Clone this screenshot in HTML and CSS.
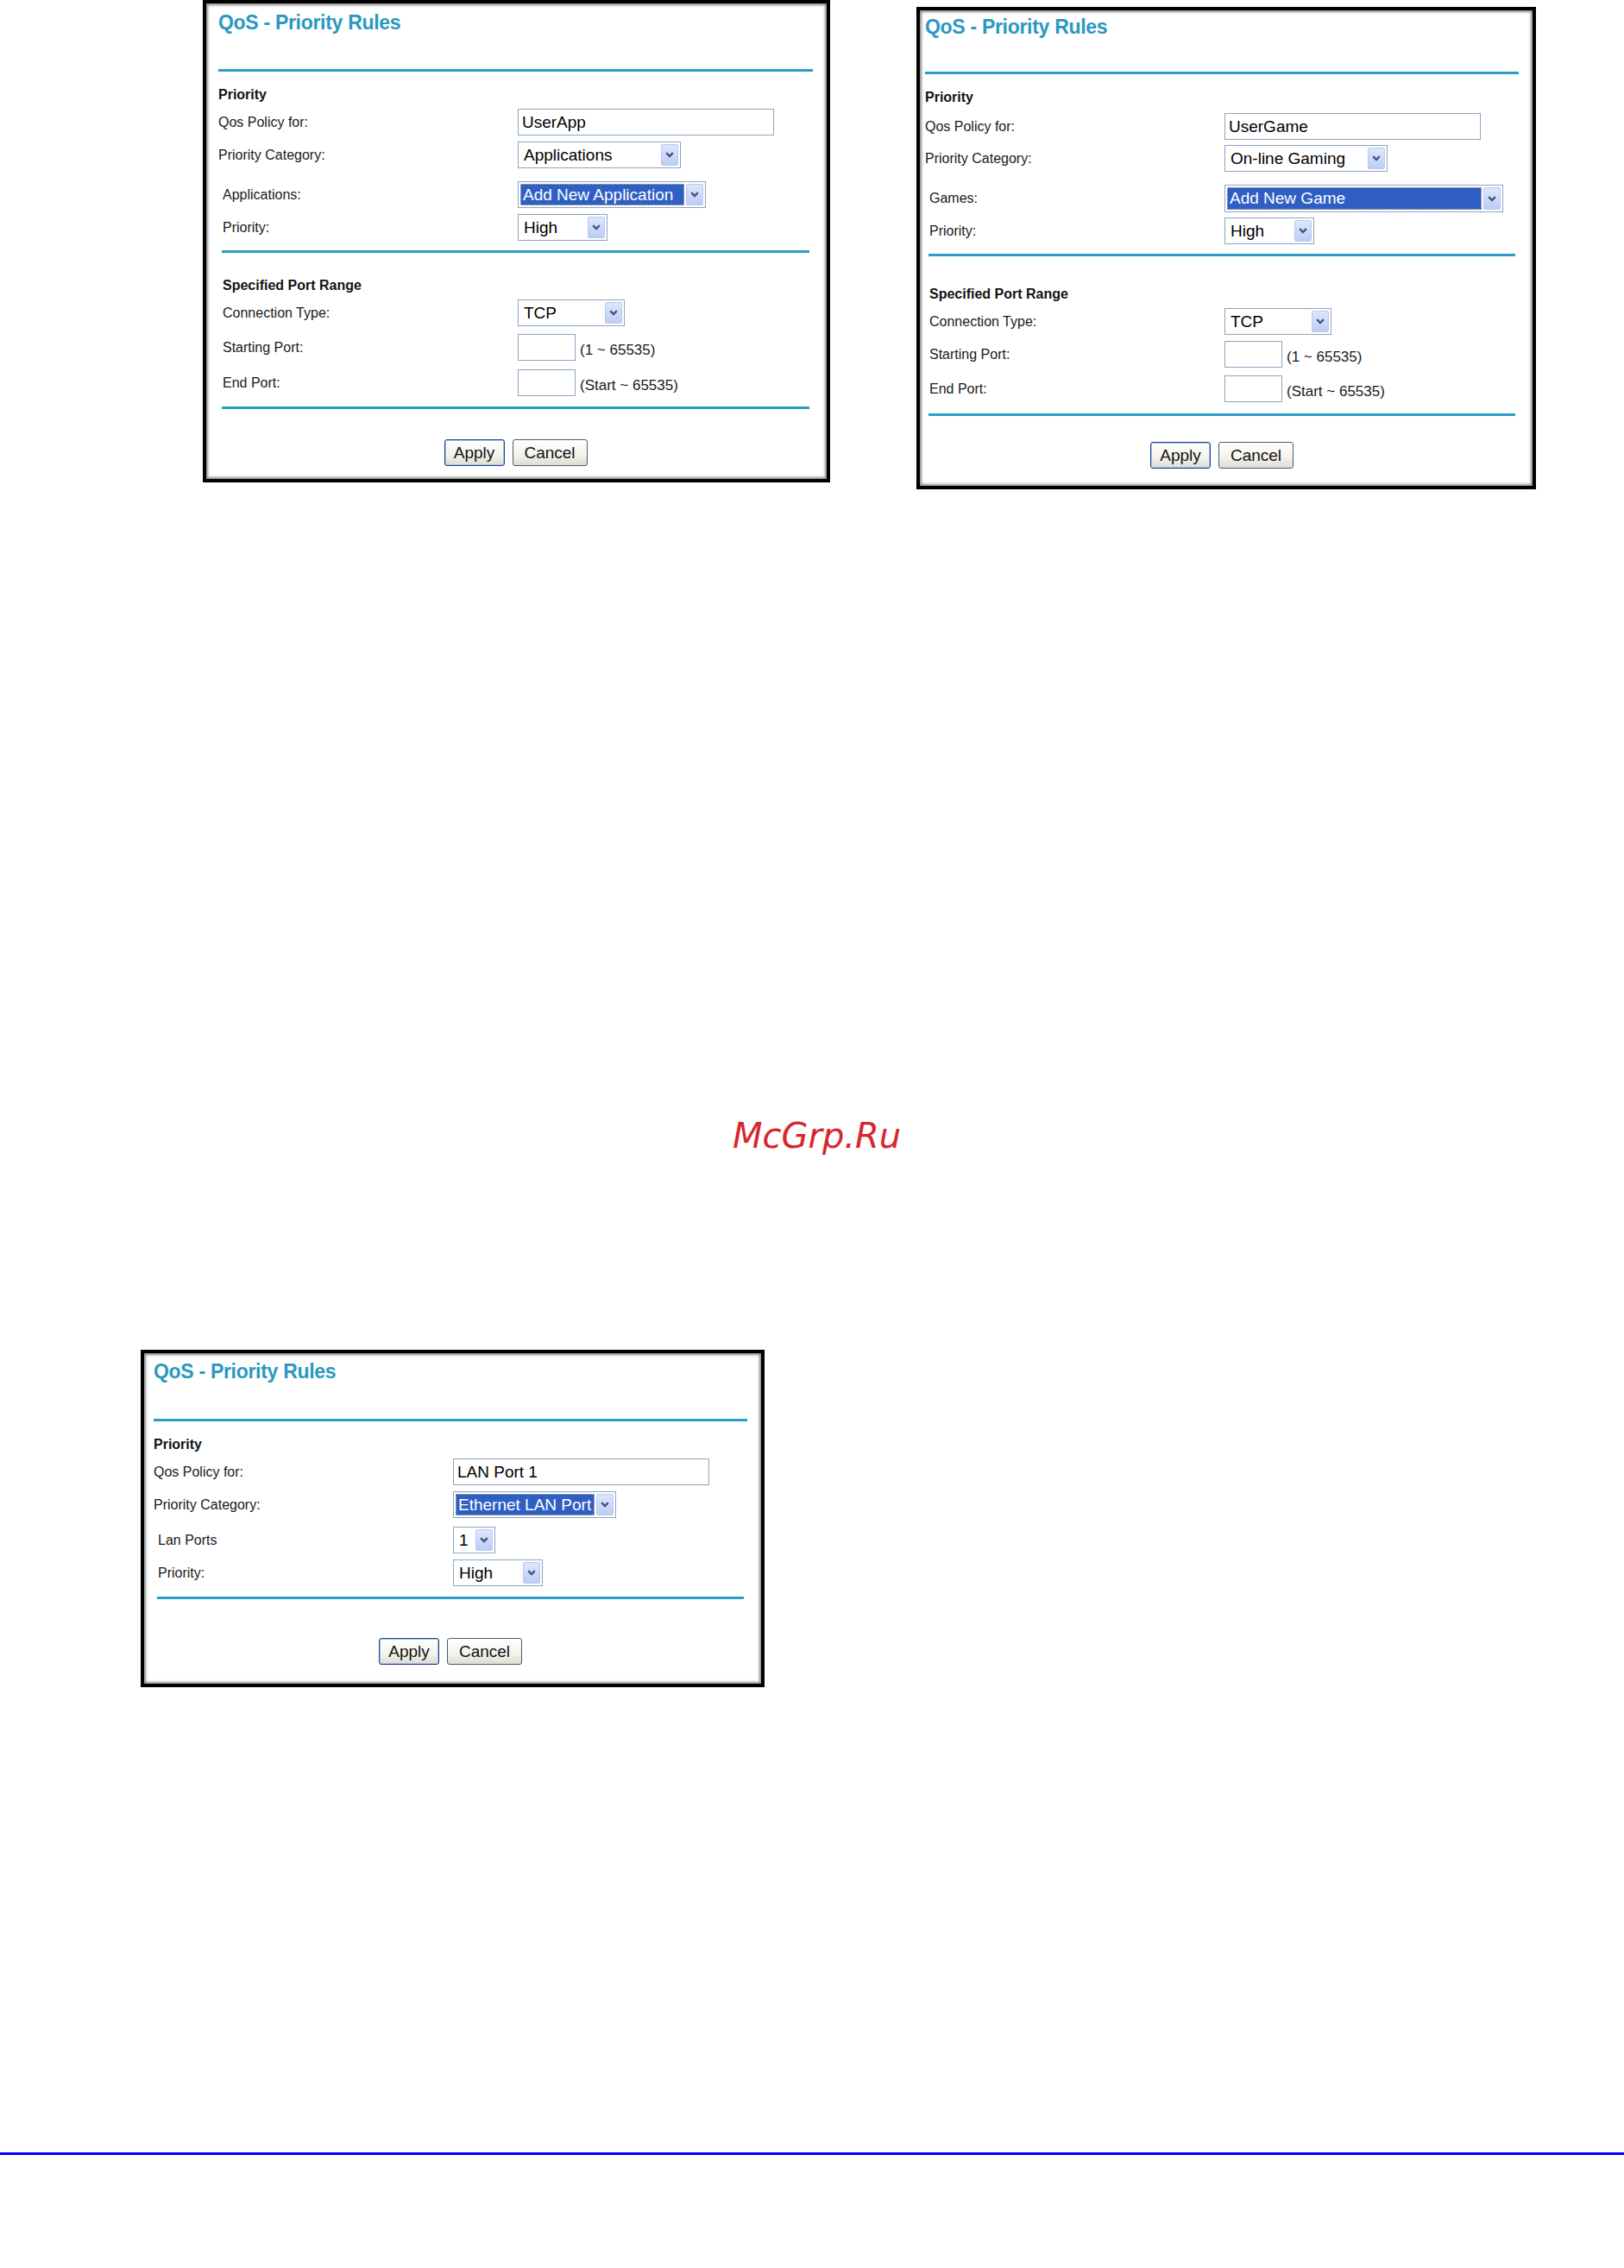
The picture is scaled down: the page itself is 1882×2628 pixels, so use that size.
FILE: index.html
```html
<!DOCTYPE html>
<html lang="en">
<head>
<meta charset="utf-8">
<title>QoS - Priority Rules</title>
<link rel="stylesheet" href="styles.css">
</head>
<body>
<div class="page">
  <div class="top-row">
    <section class="panel p1">
      <h2 class="title">QoS - Priority Rules</h2>
      <div class="rule r1"></div>
      <h3 class="head h1">Priority</h3>
      <div class="row g1"><span class="lbl">Qos Policy for:</span><input class="txt w-qos" type="text" value="UserApp"></div>
      <div class="row g2"><span class="lbl">Priority Category:</span><div class="sel w-cat"><span class="val">Applications</span><span class="arr"><svg viewBox="0 0 10 7" width="10" height="7"><path d="M1.2 1.2 L5 5 L8.8 1.2" fill="none" stroke="#44557d" stroke-width="2.4"/></svg></span></div></div>
      <div class="row ind g3"><span class="lbl">Applications:</span><div class="sel w-app"><span class="val hi">Add New Application</span><span class="arr"><svg viewBox="0 0 10 7" width="10" height="7"><path d="M1.2 1.2 L5 5 L8.8 1.2" fill="none" stroke="#44557d" stroke-width="2.4"/></svg></span></div></div>
      <div class="row ind g4"><span class="lbl">Priority:</span><div class="sel w-pri"><span class="val">High</span><span class="arr"><svg viewBox="0 0 10 7" width="10" height="7"><path d="M1.2 1.2 L5 5 L8.8 1.2" fill="none" stroke="#44557d" stroke-width="2.4"/></svg></span></div></div>
      <div class="rule r2"></div>
      <h3 class="head ind h2">Specified Port Range</h3>
      <div class="row ind g5"><span class="lbl">Connection Type:</span><div class="sel w-con"><span class="val">TCP</span><span class="arr"><svg viewBox="0 0 10 7" width="10" height="7"><path d="M1.2 1.2 L5 5 L8.8 1.2" fill="none" stroke="#44557d" stroke-width="2.4"/></svg></span></div></div>
      <div class="row ind g6"><span class="lbl">Starting Port:</span><input class="txt w-port" type="text" value=""><span class="hint">(1 ~ 65535)</span></div>
      <div class="row ind g7"><span class="lbl">End Port:</span><input class="txt w-port" type="text" value=""><span class="hint">(Start ~ 65535)</span></div>
      <div class="rule r3"></div>
      <div class="btns b1"><button class="btn apply" type="button">Apply</button><button class="btn cancel" type="button">Cancel</button></div>
    </section>

    <section class="panel p2">
      <h2 class="title">QoS - Priority Rules</h2>
      <div class="rule r1"></div>
      <h3 class="head h1">Priority</h3>
      <div class="row g1"><span class="lbl">Qos Policy for:</span><input class="txt w-qos" type="text" value="UserGame"></div>
      <div class="row g2"><span class="lbl">Priority Category:</span><div class="sel w-cat"><span class="val">On-line Gaming</span><span class="arr"><svg viewBox="0 0 10 7" width="10" height="7"><path d="M1.2 1.2 L5 5 L8.8 1.2" fill="none" stroke="#44557d" stroke-width="2.4"/></svg></span></div></div>
      <div class="row ind g3"><span class="lbl">Games:</span><div class="sel w-game"><span class="val hi">Add New Game</span><span class="arr"><svg viewBox="0 0 10 7" width="10" height="7"><path d="M1.2 1.2 L5 5 L8.8 1.2" fill="none" stroke="#44557d" stroke-width="2.4"/></svg></span></div></div>
      <div class="row ind g4"><span class="lbl">Priority:</span><div class="sel w-pri"><span class="val">High</span><span class="arr"><svg viewBox="0 0 10 7" width="10" height="7"><path d="M1.2 1.2 L5 5 L8.8 1.2" fill="none" stroke="#44557d" stroke-width="2.4"/></svg></span></div></div>
      <div class="rule r2"></div>
      <h3 class="head ind h2">Specified Port Range</h3>
      <div class="row ind g5"><span class="lbl">Connection Type:</span><div class="sel w-con"><span class="val">TCP</span><span class="arr"><svg viewBox="0 0 10 7" width="10" height="7"><path d="M1.2 1.2 L5 5 L8.8 1.2" fill="none" stroke="#44557d" stroke-width="2.4"/></svg></span></div></div>
      <div class="row ind g6"><span class="lbl">Starting Port:</span><input class="txt w-port" type="text" value=""><span class="hint">(1 ~ 65535)</span></div>
      <div class="row ind g7"><span class="lbl">End Port:</span><input class="txt w-port" type="text" value=""><span class="hint">(Start ~ 65535)</span></div>
      <div class="rule r3"></div>
      <div class="btns b1"><button class="btn apply" type="button">Apply</button><button class="btn cancel" type="button">Cancel</button></div>
    </section>
  </div>

  <div class="watermark">McGrp.Ru</div>

  <section class="panel p3">
    <h2 class="title">QoS - Priority Rules</h2>
    <div class="rule r1"></div>
    <h3 class="head h1">Priority</h3>
    <div class="row g1"><span class="lbl">Qos Policy for:</span><input class="txt w-qos" type="text" value="LAN Port 1"></div>
    <div class="row g2"><span class="lbl">Priority Category:</span><div class="sel w-cat"><span class="val hi">Ethernet LAN Port</span><span class="arr"><svg viewBox="0 0 10 7" width="10" height="7"><path d="M1.2 1.2 L5 5 L8.8 1.2" fill="none" stroke="#44557d" stroke-width="2.4"/></svg></span></div></div>
    <div class="row ind g3"><span class="lbl">Lan Ports</span><div class="sel w-lan"><span class="val">1</span><span class="arr"><svg viewBox="0 0 10 7" width="10" height="7"><path d="M1.2 1.2 L5 5 L8.8 1.2" fill="none" stroke="#44557d" stroke-width="2.4"/></svg></span></div></div>
    <div class="row ind g4"><span class="lbl">Priority:</span><div class="sel w-pri"><span class="val">High</span><span class="arr"><svg viewBox="0 0 10 7" width="10" height="7"><path d="M1.2 1.2 L5 5 L8.8 1.2" fill="none" stroke="#44557d" stroke-width="2.4"/></svg></span></div></div>
    <div class="rule r2"></div>
    <div class="btns b1"><button class="btn apply" type="button">Apply</button><button class="btn cancel" type="button">Cancel</button></div>
  </section>

  <div class="footer-line"></div>
</div>
</body>
</html>
```

FILE: styles.css
```css
* { box-sizing: border-box; }

html, body {
  margin: 0;
  padding: 0;
  background: #ffffff;
}

body {
  font-family: "Liberation Sans", Arial, sans-serif;
  color: #000;
}

.page {
  width: 1882px;
  min-height: 2628px;
}

.top-row {
  display: flex;
  align-items: flex-start;
}

/* ---------- panel frame ---------- */
.panel {
  display: flex;
  flex-direction: column;
  align-items: flex-start;
  background: #fff;
  border: 4px solid #000;
  box-shadow: inset 0 0 3px 2px #8c8c8c;
  padding: 0 16px 0 14px;
}

.p1 { width: 727px; height: 559px; margin-left: 235px; }
.p2 { width: 718px; height: 559px; margin-left: 100px; margin-top: 8px; padding-left: 6px; }
.p3 { width: 723px; height: 391px; margin-left: 163px; margin-top: 224px; padding-left: 11px; }

.title {
  margin: 0;
  font-size: 23px;
  line-height: 28px;
  font-weight: bold;
  color: #2a98c0;
  letter-spacing: -0.3px;
}

.rule {
  align-self: stretch;
  height: 3px;
  background: #2a9ec6;
}
.rule.r2, .rule.r3 { margin-left: 4px; margin-right: 4px; }

.head {
  margin: 0;
  font-size: 16px;
  line-height: 20px;
  font-weight: bold;
  color: #111;
}

.row {
  display: flex;
  align-items: center;
  font-size: 16px;
  color: #1a1a1a;
}
.row .lbl { width: 347px; flex: none; }
.ind { padding-left: 5px; }
.row.ind .lbl { width: 342px; }

/* ---------- text inputs ---------- */
.txt {
  height: 31px;
  border: 1px solid #8ea4bf;
  background: #fff;
  font-family: "Liberation Sans", Arial, sans-serif;
  font-size: 19px;
  color: #000;
  padding: 0 4px;
  margin: 0;
  outline: none;
}
.w-qos { width: 297px; }
.w-port { width: 67px; }

.hint {
  margin-left: 5px;
  margin-top: 7px;
  font-size: 17px;
  color: #1a1a1a;
}

/* ---------- select look-alikes ---------- */
.sel {
  display: flex;
  align-items: stretch;
  height: 31px;
  border: 1px solid #8ea4bf;
  background: #fff;
  padding: 2px;
  font-size: 19px;
  overflow: hidden;
}
.sel .val {
  flex: 1;
  display: flex;
  align-items: center;
  padding-left: 4px;
  white-space: nowrap;
  overflow: hidden;
  color: #000;
}
.sel .val.hi {
  background: #2f5fc4;
  color: #fff;
  border: 1px dotted #d8cf8a;
  padding-left: 2px;
  margin-right: 2px;
}
.sel .arr {
  flex: none;
  width: 20px;
  display: flex;
  align-items: center;
  justify-content: center;
  background: linear-gradient(#dce6fd, #bccdf6);
  border: 1px solid #b9c9ee;
  border-radius: 2px;
}
.w-cat { width: 189px; }
.w-app { width: 218px; }
.w-game { width: 323px; }
.w-pri { width: 104px; }
.w-con { width: 124px; }
.w-lan { width: 49px; }

/* ---------- buttons ---------- */
.btns {
  align-self: stretch;
  display: flex;
  justify-content: center;
  gap: 9px;
}
.btn {
  height: 31px;
  margin: 0;
  padding: 0;
  font-family: "Liberation Sans", Arial, sans-serif;
  font-size: 19px;
  color: #111;
  background: linear-gradient(#ffffff, #f3f2ec 60%, #dedcd2);
  border: 1px solid #4f5a6b;
  border-radius: 3px;
}
.btn.apply {
  width: 70px;
  border-color: #23427c;
  box-shadow: inset 0 0 0 1px #a9c1ec;
}
.btn.cancel { width: 87px; }

/* ---------- vertical rhythm: panel 1 ---------- */
.p1 .title { margin-top: 8px; }
.p1 .r1 { margin-top: 40px; }
.p1 .h1 { margin-top: 17px; }
.p1 .g1 { margin-top: 6px; }
.p1 .g2 { margin-top: 7px; }
.p1 .g3 { margin-top: 15px; }
.p1 .g4 { margin-top: 7px; }
.p1 .r2 { margin-top: 11px; }
.p1 .h2 { margin-top: 28px; }
.p1 .g5 { margin-top: 6px; }
.p1 .g6 { margin-top: 9px; }
.p1 .g7 { margin-top: 10px; }
.p1 .r3 { margin-top: 12px; }
.p1 .b1 { margin-top: 35px; }

/* ---------- panel 2 ---------- */
.p2 .title { margin-top: 5px; }
.p2 .r1 { margin-top: 38px; }
.p2 .h1 { margin-top: 17px; }
.p2 .g1 { margin-top: 8px; }
.p2 .g2 { margin-top: 6px; }
.p2 .g3 { margin-top: 15px; }
.p2 .w-game { height: 32px; }
.p2 .g4 { margin-top: 6px; }
.p2 .r2 { margin-top: 11px; }
.p2 .h2 { margin-top: 34px; }
.p2 .g5 { margin-top: 6px; }
.p2 .g6 { margin-top: 7px; }
.p2 .g7 { margin-top: 9px; }
.p2 .r3 { margin-top: 13px; }
.p2 .b1 { margin-top: 30px; }

/* ---------- panel 3 ---------- */
.p3 .title { margin-top: 7px; }
.p3 .r1 { margin-top: 41px; }
.p3 .h1 { margin-top: 17px; }
.p3 .g1 { margin-top: 6px; }
.p3 .g2 { margin-top: 7px; }
.p3 .g3 { margin-top: 10px; }
.p3 .g4 { margin-top: 7px; }
.p3 .r2 { margin-top: 12px; }
.p3 .b1 { margin-top: 45px; }

/* ---------- watermark & footer ---------- */
.watermark {
  margin-top: 725px;
  padding-left: 849px;
  font-family: "DejaVu Sans", sans-serif;
  font-style: italic;
  font-size: 40px;
  line-height: 48px;
  color: #d7262c;
}

.footer-line {
  margin-top: 539px;
  height: 3px;
  background: #0000ff;
}
```
